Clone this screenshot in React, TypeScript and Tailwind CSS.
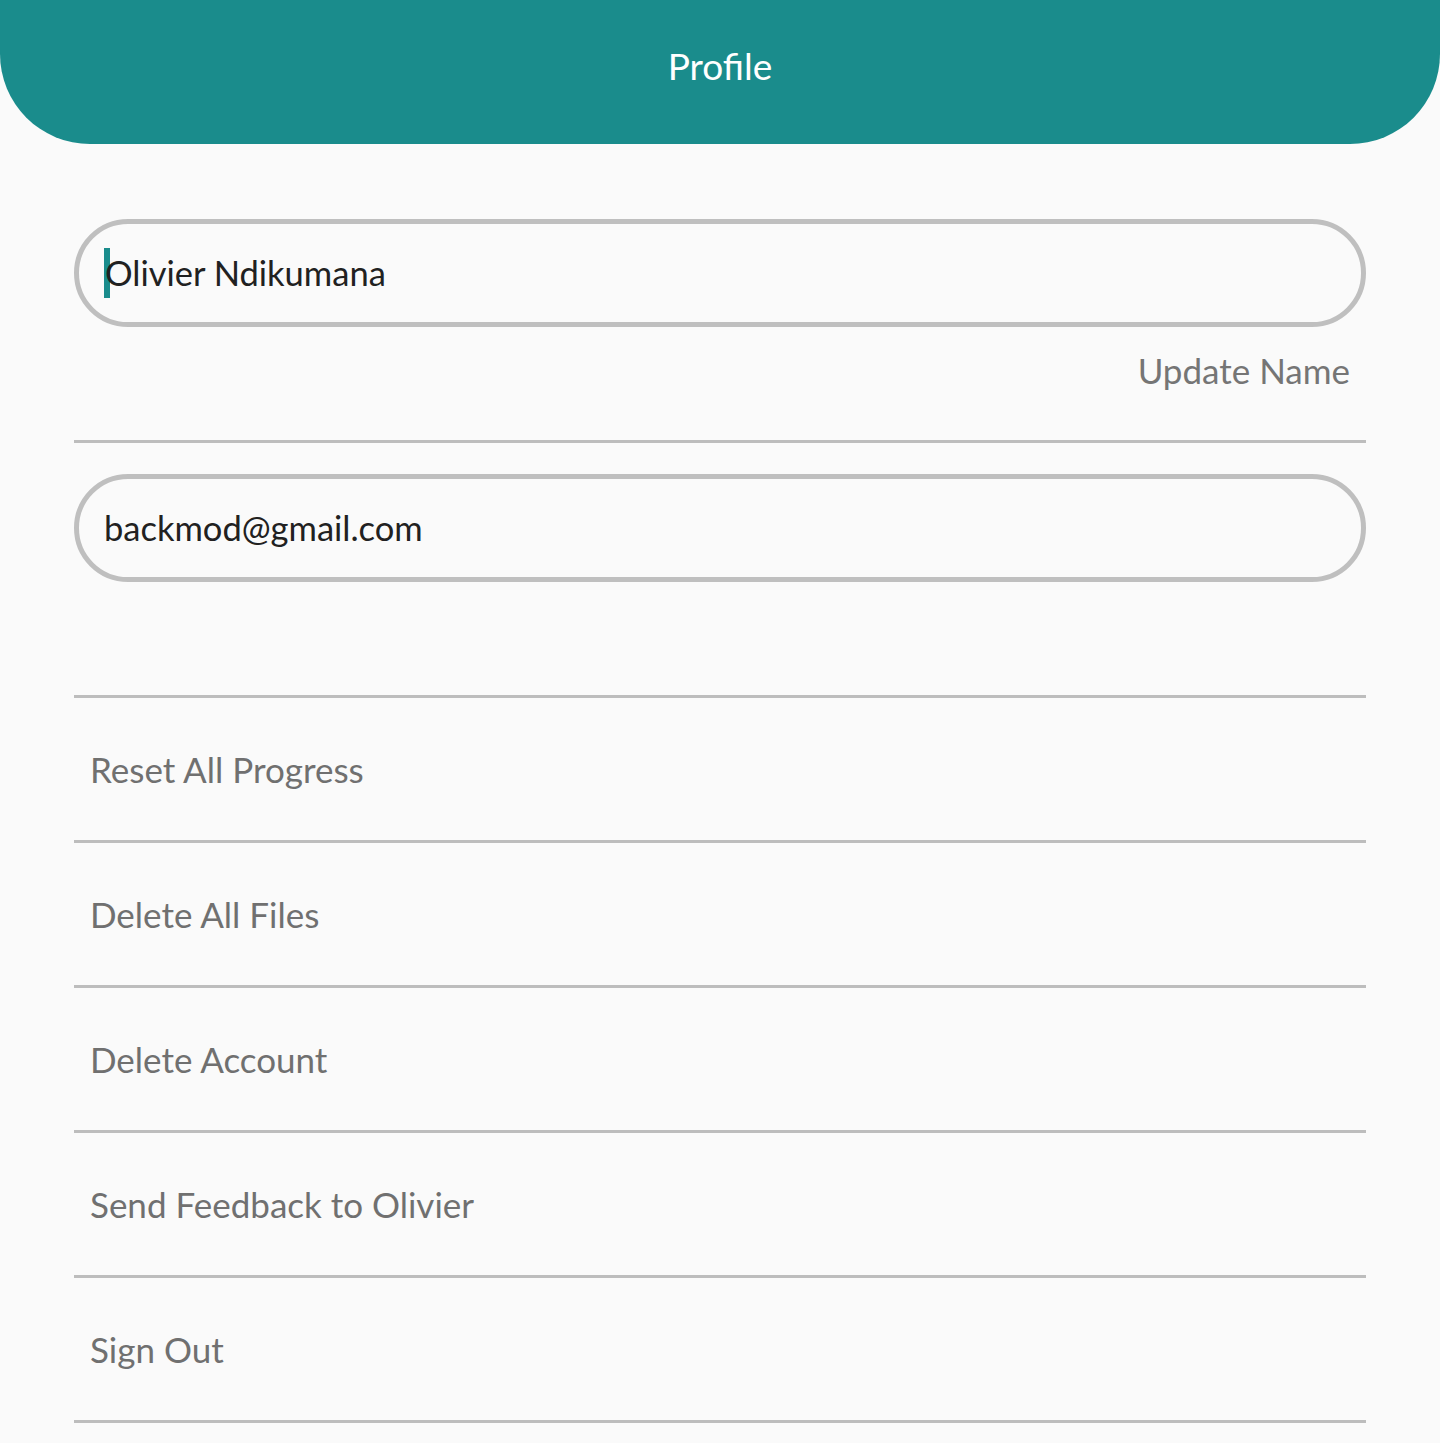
import React from 'react'

const font = { fontFamily: 'Lato, "Noto Sans", sans-serif' }

const actions = ['Reset All Progress', 'Delete All Files', 'Delete Account', 'Send Feedback to Olivier', 'Sign Out']

function Field({ value, caret }: { value: string; caret?: boolean }) {
  return (
    <div className="h-[108px] border-[5px] border-[#bfbfbf] rounded-full flex items-center pl-[25px]">
      {caret && <span className="inline-block w-[6px] h-[50px] bg-[#1a8c8c] mr-[-5px]" />}
      <span className="text-[34.5px] text-[#212121] leading-none">{value}</span>
    </div>
  )
}

export default function App() {
  return (
    <div className="min-h-[1443px] bg-[#fafafa]" style={font}>
      <div className="h-[144px] bg-[#1a8c8c] rounded-b-[90px] flex items-center justify-center pb-[12px]">
        <h1 className="text-[37px] text-white">Profile</h1>
      </div>

      <div className="mx-[74px] pt-[75px]">
        <Field value="Olivier Ndikumana" caret />
        <div className="h-[113px] pt-[21px] pr-[16px] text-right">
          <span className="text-[35px] leading-[44px] text-[#757575]">Update Name</span>
        </div>
        <div className="h-[3px] bg-[#bdbdbd]" />
        <div className="mt-[31px]">
          <Field value="backmod@gmail.com" />
        </div>
        <div className="h-[113px]" />

        <div className="border-b-[3px] border-[#bdbdbd]">
          {actions.map((a) => (
            <div key={a} className="h-[145px] border-t-[3px] border-[#bdbdbd] flex items-center pl-[16px]">
              <span className="text-[35px] text-[#707070]">{a}</span>
            </div>
          ))}
        </div>
      </div>
    </div>
  )
}
